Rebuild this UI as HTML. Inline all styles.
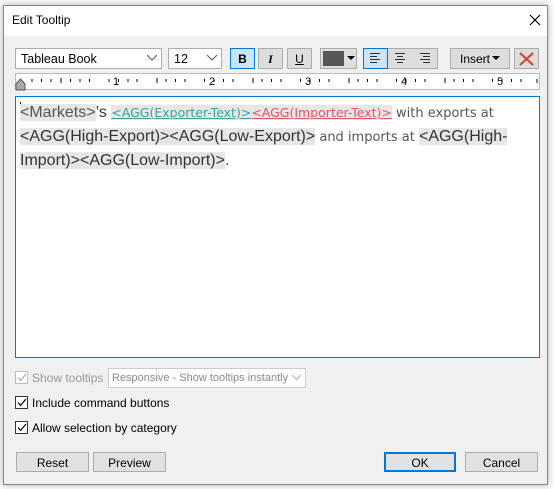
<!DOCTYPE html>
<html><head><style>
*{box-sizing:border-box;margin:0;padding:0}
body{width:554px;height:489px;background:#fff;position:relative;overflow:hidden;font-family:"Liberation Sans",sans-serif;font-size:12px;color:#000}
.a{position:absolute}
.dlg{left:3px;top:5px;width:545px;height:480px;background:#f0f0f0;border:1px solid #888;box-shadow:0 0 6px rgba(0,0,0,.3)}
.title{left:0;top:0;width:543px;height:30px;background:#fff}
.box{position:absolute;background:#fff;border:1px solid #adadad}
.btn{position:absolute;background:#e1e1e1;border:1px solid #adadad;text-align:center;font-size:12px}
.chk{position:absolute;width:13px;height:13px;border:1px solid #333;background:#fff}
.tx{position:absolute;left:20px;top:101px;width:496px;font-family:"DejaVu Sans","Liberation Sans",sans-serif;color:#555;font-size:13px;line-height:23px}
.f{font-family:"Liberation Sans",sans-serif;font-size:16px;background:#e6e6e6;color:#333}
.t{color:#3aa59c;text-decoration:underline;font-size:12.5px;background:#e6e6e6}
.r{color:#e5555c;text-decoration:underline;font-size:12.5px;background:#e6e6e6}
</style></head><body>
<div class="a" style="left:0;top:0;width:554px;height:489px;background:#fafafa"></div>
<div class="a dlg">
 <div class="a title"></div>
</div>
<div class="a" style="left:12px;top:13px;font-size:12px">Edit Tooltip</div>
<svg class="a" style="left:529px;top:14px" width="12" height="12"><path d="M1 1L11 11M11 1L1 11" stroke="#000" stroke-width="1.2"/></svg>

<div class="box" style="left:15px;top:48px;width:147px;height:21px;padding:3px 0 0 5px;font-size:12.5px">Tableau Book</div>
<svg class="a" style="left:147px;top:55px" width="10" height="6"><path d="M0 0L5 5L10 0" fill="none" stroke="#555"/></svg>
<div class="box" style="left:168px;top:48px;width:54px;height:21px;padding:3px 0 0 5px;font-size:12.5px">12</div>
<svg class="a" style="left:207px;top:55px" width="10" height="6"><path d="M0 0L5 5L10 0" fill="none" stroke="#555"/></svg>
<div class="btn" style="left:230px;top:48px;width:25px;height:21px;background:#cce4f7;border-color:#0078d7;font-weight:bold;padding-top:3px">B</div>
<div class="btn" style="left:258px;top:48px;width:25px;height:21px;background:#ddd;font-style:italic;font-weight:bold;font-family:'Liberation Serif';padding-top:3px">I</div>
<div class="btn" style="left:287px;top:48px;width:25px;height:21px;background:#ddd;text-decoration:underline;padding-top:3px">U</div>
<div class="btn" style="left:320px;top:48px;width:37px;height:21px;background:#ddd"></div>
<div class="a" style="left:323px;top:51px;width:21px;height:15px;background:#555"></div>
<svg class="a" style="left:347px;top:56px" width="8" height="5"><path d="M0 0H8L4 4Z" fill="#000"/></svg>
<div class="btn" style="left:363px;top:48px;width:75px;height:21px;background:#ddd"></div>
<div class="a" style="left:363px;top:48px;width:25px;height:21px;background:#cce4f7;border:1px solid #0078d7"></div>
<svg class="a" style="left:369px;top:53px" width="64" height="11"><g stroke="#333"><path d="M1 .5H11M1 3.5H8M1 6.5H11M1 9.5H8"/><path d="M26 .5H36M28 3.5H34M26 6.5H36M28 9.5H34"/><path d="M51 .5H61M54 3.5H61M51 6.5H61M54 9.5H61"/></g></svg>
<div class="btn" style="left:450px;top:48px;width:60px;height:21px;background:#ddd;padding-top:3px;text-align:left;padding-left:9px">Insert</div>
<svg class="a" style="left:492px;top:56px" width="8" height="5"><path d="M0 0H8L4 4Z" fill="#000"/></svg>
<div class="btn" style="left:514px;top:48px;width:25px;height:21px;background:#ddd"></div>
<svg class="a" style="left:519px;top:52px" width="15" height="14"><path d="M1 1L14 13M14 1L1 13" stroke="#d0453a" stroke-width="2.2"/></svg>

<div class="box" style="left:15px;top:73px;width:525px;height:17px;border-color:#bbb"></div>
<svg class="a" style="left:15px;top:73px" width="525" height="20">
<g stroke="#000">
<path d="M17 6v3M26.5 6v3M36 6v3M55.5 6v3M65 6v3M74.5 6v3M94 6v3M103.5 6v3M113 6v3M122 6v3M151 6v3M160.5 6v3M170 6v3M189.5 6v3M199 6v3M208.5 6v3M218 6v3M247 6v3M256.5 6v3M266 6v3M285.5 6v3M295 6v3M304.5 6v3M314 6v3M343 6v3M352.5 6v3M362 6v3M381.5 6v3M391 6v3M400.5 6v3M410 6v3M439 6v3M448.5 6v3M458 6v3M477.5 6v3M487 6v3M496.5 6v3M506 6v3M522 6v4"/>
<path d="M46 5v5M142 5v5M238 5v5M334 5v5M430 5v5"/>
</g>
<g font-size="11" font-family="Liberation Sans"><text x="98" y="12">1</text><text x="194" y="12">2</text><text x="290" y="12">3</text><text x="386" y="12">4</text><text x="482" y="12">5</text></g>
<path d="M1 17V11L5.5 6L10 11V17Z" fill="#aaa" stroke="#555"/>
</svg>

<div class="a" style="left:15px;top:96px;width:525px;height:262px;background:#fff;border:1px solid #0078d7"></div>
<div class="a" style="left:20px;top:102px;width:1px;height:19px;background:#000"></div>
<div class="tx"><span class="f" style="color:#555">&lt;Markets&gt;</span><span class="f" style="background:none">’s </span><span class="t">&lt;AGG(Exporter-Text)&gt;</span><span class="r">&lt;AGG(Importer-Text)&gt;</span> with exports at <span class="f">&lt;AGG(High-Export)&gt;&lt;AGG(Low-Export)&gt;</span> and imports at <span class="f">&lt;AGG(High-Import)&gt;&lt;AGG(Low-Import)&gt;</span><span class="f" style="background:none">.</span></div>

<div class="chk" style="left:15px;top:371px;border-color:#bbb"></div>
<svg class="a" style="left:17px;top:373px" width="10" height="9"><path d="M1 4.5L3.5 7.5L9 1" fill="none" stroke="#aaa" stroke-width="1.2"/></svg>
<div class="a" style="left:32px;top:371px;color:#999">Show tooltips</div>
<div class="box" style="left:108px;top:368px;width:198px;height:20px;border-color:#ccc;color:#888;padding:3px 0 0 3px;font-size:11px;white-space:nowrap;overflow:hidden">Responsive - Show tooltips instantly</div>
<svg class="a" style="left:292px;top:375px" width="9" height="5"><path d="M0 0L4.5 4.5L9 0" fill="none" stroke="#aaa"/></svg>

<div class="chk" style="left:15px;top:396px"></div>
<svg class="a" style="left:17px;top:398px" width="10" height="9"><path d="M1 4.5L3.5 7.5L9 1" fill="none" stroke="#000" stroke-width="1.2"/></svg>
<div class="a" style="left:32px;top:396px">Include command buttons</div>
<div class="chk" style="left:15px;top:421px"></div>
<svg class="a" style="left:17px;top:423px" width="10" height="9"><path d="M1 4.5L3.5 7.5L9 1" fill="none" stroke="#000" stroke-width="1.2"/></svg>
<div class="a" style="left:32px;top:421px">Allow selection by category</div>

<div class="btn" style="left:16px;top:452px;width:73px;height:20px;padding-top:3px">Reset</div>
<div class="btn" style="left:93px;top:452px;width:73px;height:20px;padding-top:3px">Preview</div>
<div class="btn" style="left:384px;top:452px;width:72px;height:20px;padding-top:2px;border:2px solid #0078d7">OK</div>
<div class="btn" style="left:465px;top:452px;width:73px;height:20px;padding-top:3px">Cancel</div>
</body></html>
